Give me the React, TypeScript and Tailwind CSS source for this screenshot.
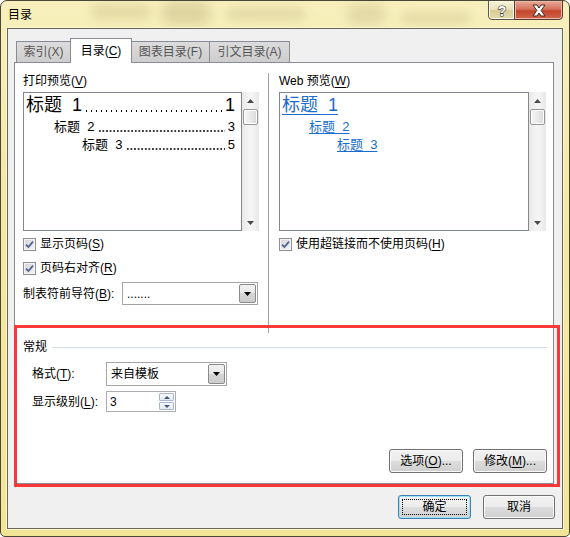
import React from "react";

const FONT = "font-['Liberation_Sans','Noto_Sans_CJK_SC',sans-serif]";

function Tri({ up = false, color = "#3c3c3c", w = 7, h = 4 }: { up?: boolean; color?: string; w?: number; h?: number }) {
  return (
    <svg width={w} height={h} viewBox={`0 0 ${w} ${h}`} className="block">
      {up ? (
        <polygon points={`0,${h} ${w},${h} ${w / 2},0`} fill={color} />
      ) : (
        <polygon points={`0,0 ${w},0 ${w / 2},${h}`} fill={color} />
      )}
    </svg>
  );
}

function VScroll() {
  return (
    <div className="flex h-full w-[17px] flex-col items-center bg-[linear-gradient(90deg,#e8e8e8,#f4f4f4_40%,#f4f4f4_60%,#e8e8e8)]">
      <div className="flex h-[17px] w-full items-center justify-center">
        <Tri up color="#4a4a4a" />
      </div>
      <div className="h-[16px] w-[15px] rounded-[2px] border border-[#969696] bg-[linear-gradient(90deg,#f6f6f6,#e9e9e9_50%,#d8d8d8)] shadow-[inset_0_0_0_1px_#ffffff]" />
      <div className="flex-1" />
      <div className="flex h-[17px] w-full items-center justify-center">
        <Tri color="#4a4a4a" />
      </div>
    </div>
  );
}

function Check() {
  return (
    <div className="flex h-[13px] w-[13px] shrink-0 items-center justify-center border border-[#8e8f8f] bg-[linear-gradient(135deg,#d4d4d4,#f4f4f4)] shadow-[inset_0_0_0_1px_#f4f4f4]">
      <svg width="9" height="9" viewBox="0 0 9 9" className="block">
        <path d="M1 4.6 L3.4 7 L8 1.6" stroke="#4a6190" strokeWidth="1.7" fill="none" />
      </svg>
    </div>
  );
}

function DropArrow() {
  return (
    <div className="flex h-full w-[17px] shrink-0 items-center justify-center rounded-[2px] border border-[#8a8a8a] bg-[linear-gradient(#f3f3f3,#e6e6e6_50%,#d6d6d6_50%,#cbcbcb)]">
      <Tri color="#000000" />
    </div>
  );
}

function Btn({ children, w, isDefault = false }: { children: React.ReactNode; w: string; isDefault?: boolean }) {
  return (
    <div
      className={
        isDefault
          ? `relative flex h-[24px] ${w} items-center justify-center rounded-[3px] border border-[#3c7fb1] bg-[linear-gradient(#f4f4f4,#ececec_50%,#dfdfdf_50%,#d2d2d2)] shadow-[inset_0_0_0_1px_#9fe2fb]`
          : `flex h-[24px] ${w} items-center justify-center rounded-[3px] border border-[#707070] bg-[linear-gradient(#f2f2f2,#ebebeb_50%,#dddddd_50%,#cfcfcf)] shadow-[inset_0_0_0_1px_#fbfbfb]`
      }
    >
      {isDefault && <div className="pointer-events-none absolute inset-[3px] border border-dotted border-[#000000]" />}
      <span className="leading-[16px]">{children}</span>
    </div>
  );
}

const U = ({ c }: { c: string }) => <span className="underline decoration-1 underline-offset-[2px]">{c}</span>;

export default function App() {
  return (
    <div
      className={`relative h-[537px] w-[570px] overflow-hidden rounded-t-[7px] rounded-b-[5px] border border-[#4b4636] bg-[linear-gradient(180deg,#f7f0bd_0%,#f4e9a6_35%,#f2e595_100%)] ${FONT} text-[12px] text-black`}
    >
      {/* blurred aero background */}
      <div className="pointer-events-none absolute left-[90px] top-[3px] h-[16px] w-[60px] rounded-full bg-[#d8cd97] opacity-60 blur-[5px]" />
      <div className="pointer-events-none absolute left-[160px] top-[0px] h-[24px] w-[50px] rounded-full bg-[#b9ad7a] opacity-40 blur-[6px]" />
      <div className="pointer-events-none absolute left-[225px] top-[6px] h-[14px] w-[80px] rounded-full bg-[#d9cf9c] opacity-60 blur-[5px]" />
      <div className="pointer-events-none absolute left-[345px] top-[2px] h-[22px] w-[40px] rounded-full bg-[#c4b988] opacity-40 blur-[6px]" />
      <div className="pointer-events-none absolute left-[400px] top-[10px] h-[14px] w-[70px] rounded-full bg-[#d6cb96] opacity-50 blur-[5px]" />

      {/* title bar */}
      <div className="relative flex h-[27px] items-start">
        <div className="flex h-[27px] items-center pl-[7px] leading-none">目录</div>
        <div className="flex-1" />
        <div className="mr-[6px] -mt-px flex">
          <div className="flex h-[20px] w-[27px] items-center justify-center rounded-bl-[4px] border border-[#5a5646] bg-[linear-gradient(#f7f3dc,#e9e0b6_50%,#d8cc96_50%,#e4dbaa)] shadow-[inset_0_0_0_1px_#fffbe6]">
            <svg width="12" height="15" viewBox="0 0 12 15" className="block">
              <text x="6" y="12.5" textAnchor="middle" fontSize="14" fontWeight="bold" fontFamily="Liberation Sans, sans-serif" fill="#ffffff" stroke="#3a3a3a" strokeWidth="1.2" paintOrder="stroke">?</text>
            </svg>
          </div>
          <div className="-ml-px flex h-[20px] w-[49px] items-center justify-center rounded-br-[4px] border border-[#5a3a30] bg-[linear-gradient(#e9a898,#d6725c_45%,#c4442a_55%,#d0664c)] shadow-[inset_0_0_0_1px_#efb9a9]">
            <svg width="16" height="13" viewBox="0 0 16 13" className="block">
              <path
                d="M2 1 H6 L8 4 L10 1 H14 L10.2 6.5 L14 12 H10 L8 9 L6 12 H2 L5.8 6.5 Z"
                fill="#ffffff"
                stroke="#3a2a25"
                strokeWidth="1"
                strokeLinejoin="round"
              />
            </svg>
          </div>
        </div>
      </div>

      {/* client area */}
      <div className="relative mx-[6px] flex h-[501px] flex-col border border-[#6a6650] bg-[#f0f0f0] shadow-[0_0_0_1px_#fbf6d6]">
        {/* tabs */}
        <div className="relative z-10 -mb-px ml-[6px] mt-[9px] flex h-[25px] items-end pl-[2px]">
          <div className="flex h-[22px] w-[54px] items-center justify-center border-b border-l border-t border-[#898c95] bg-[linear-gradient(#dcdcdc,#cdcdcd)] text-[#555555]">
            <span className="leading-[16px]">索引(X)</span>
          </div>
          <div className="flex h-[25px] w-[62px] items-start justify-center border-l border-r border-t border-[#898c95] bg-white pt-[4px]">
            <span className="leading-[16px]">
              目录(<U c="C" />)
            </span>
          </div>
          <div className="flex h-[22px] w-[78px] items-center justify-center border-b border-r border-t border-[#898c95] bg-[linear-gradient(#dcdcdc,#cdcdcd)] text-[#555555]">
            <span className="leading-[16px]">图表目录(F)</span>
          </div>
          <div className="flex h-[22px] w-[80px] items-center justify-center border-b border-r border-t border-[#898c95] bg-[linear-gradient(#dcdcdc,#cdcdcd)] text-[#555555]">
            <span className="leading-[16px]">引文目录(A)</span>
          </div>
        </div>

        {/* tab panel */}
        <div className="ml-[6px] flex h-[422px] w-[540px] flex-col border border-[#898c95] bg-white">
          {/* top two columns */}
          <div className="flex h-[270px]">
            {/* left column */}
            <div className="ml-[8px] flex w-[236px] flex-col">
              <div className="mt-[10px] h-[16px] leading-[16px]">
                打印预览(<U c="V" />)
              </div>
              <div className="mt-[3px] flex h-[139px]">
                <div className="flex h-full w-[219px] flex-col overflow-hidden border border-[#828790] bg-white">
                  <div className="flex h-[24px] items-center whitespace-pre pl-[2px] pr-[6px] text-[18px] leading-[24px]">
                    <span className="shrink-0">标题  1</span>
                    <span className="mb-[5px] ml-[2px] mr-[2px] h-[2px] min-w-0 flex-1 self-end bg-[radial-gradient(circle,#000000_0.8px,transparent_1.1px)] bg-[length:5px_2px] bg-left bg-repeat-x" />
                    <span className="shrink-0">1</span>
                  </div>
                  <div className="flex h-[20px] items-center whitespace-pre pl-[30px] pr-[6px] text-[13px] leading-[20px]">
                    <span className="shrink-0">标题  2</span>
                    <span className="mb-[5px] ml-[4px] mr-[3px] h-[2px] min-w-0 flex-1 self-end bg-[radial-gradient(circle,#000000_0.6px,transparent_0.9px)] bg-[length:3.6px_2px] bg-left bg-repeat-x" />
                    <span className="shrink-0">3</span>
                  </div>
                  <div className="flex h-[16px] items-center whitespace-pre pl-[58px] pr-[6px] text-[13px] leading-[16px]">
                    <span className="shrink-0">标题  3</span>
                    <span className="mb-[3px] ml-[4px] mr-[3px] h-[2px] min-w-0 flex-1 self-end bg-[radial-gradient(circle,#000000_0.6px,transparent_0.9px)] bg-[length:3.6px_2px] bg-left bg-repeat-x" />
                    <span className="shrink-0">5</span>
                  </div>
                </div>
                <VScroll />
              </div>
              <div className="mt-[5px] flex h-[16px] items-center">
                <Check />
                <span className="ml-[4px] leading-[16px]">
                  显示页码(<U c="S" />)
                </span>
              </div>
              <div className="mt-[8px] flex h-[16px] items-center">
                <Check />
                <span className="ml-[4px] leading-[16px]">
                  页码右对齐(<U c="R" />)
                </span>
              </div>
              <div className="mt-[6px] flex h-[23px] items-center">
                <span className="flex-1 leading-[16px]">
                  制表符前导符(<U c="B" />):
                </span>
                <div className="mr-[1px] flex h-[23px] w-[136px] items-stretch border border-[#a5a5a5] bg-white p-[1px]">
                  <div className="flex flex-1 items-center pl-[3px] leading-[16px]">.......</div>
                  <DropArrow />
                </div>
              </div>
            </div>

            {/* divider */}
            <div className="ml-[9px] mt-[10px] h-[260px] w-px bg-[#a0a0a0]" />

            {/* right column */}
            <div className="ml-[10px] flex w-[267px] flex-col">
              <div className="mt-[10px] h-[16px] leading-[16px]">
                Web 预览(<U c="W" />)
              </div>
              <div className="mt-[3px] flex h-[139px]">
                <div className="flex h-full w-[250px] flex-col border border-[#828790] bg-white text-[#1a6dcf]">
                  <div className="h-[24px] whitespace-pre pl-[2px] text-[18px] leading-[24px]">
                    <span className="underline decoration-1 underline-offset-[3px]">标题  1</span>
                  </div>
                  <div className="h-[20px] whitespace-pre pl-[29px] text-[13px] leading-[20px]">
                    <span className="underline decoration-1 underline-offset-[2px]">标题  2</span>
                  </div>
                  <div className="h-[16px] whitespace-pre pl-[57px] text-[13px] leading-[16px]">
                    <span className="underline decoration-1 underline-offset-[2px]">标题  3</span>
                  </div>
                </div>
                <VScroll />
              </div>
              <div className="mt-[5px] flex h-[16px] items-center">
                <Check />
                <span className="ml-[4px] leading-[16px]">
                  使用超链接而不使用页码(<U c="H" />)
                </span>
              </div>
            </div>
          </div>

          {/* general section */}
          <div className="mt-[6px] flex h-[16px] items-center pl-[8px] pr-[6px]">
            <span className="leading-[16px]">常规</span>
            <div className="ml-[5px] h-px flex-1 bg-[#d5dfe5]" />
          </div>
          <div className="mt-[7px] flex h-[24px] items-center pl-[17px]">
            <span className="w-[74px] leading-[16px]">
              格式(<U c="T" />):
            </span>
            <div className="flex h-[24px] w-[121px] items-stretch border border-[#a5a5a5] bg-white p-[1px]">
              <div className="flex flex-1 items-center pl-[3px] leading-[16px]">来自模板</div>
              <DropArrow />
            </div>
          </div>
          <div className="mt-[5px] flex h-[21px] items-center pl-[17px]">
            <span className="w-[74px] leading-[16px]">
              显示级别(<U c="L" />):
            </span>
            <div className="flex h-[21px] w-[70px] items-stretch border border-[#abadb3] bg-white">
              <div className="flex flex-1 items-center pl-[3px] leading-[16px]">3</div>
              <div className="my-px mr-px flex w-[15px] flex-col gap-px">
                <div className="flex flex-1 items-center justify-center rounded-[1px] border border-[#a9b7cc] bg-[linear-gradient(#f7f9fc,#e3e9f2)]">
                  <Tri up color="#46577a" w={6} h={3} />
                </div>
                <div className="flex flex-1 items-center justify-center rounded-[1px] border border-[#a9b7cc] bg-[linear-gradient(#f7f9fc,#e3e9f2)]">
                  <Tri color="#46577a" w={6} h={3} />
                </div>
              </div>
            </div>
          </div>
          <div className="mt-[37px] flex h-[24px] justify-end gap-[10px] pr-[6px]">
            <Btn w="w-[74px]">
              选项(<U c="O" />)...
            </Btn>
            <Btn w="w-[74px]">
              修改(<U c="M" />)...
            </Btn>
          </div>
        </div>

        {/* dialog buttons */}
        <div className="mt-[11px] flex justify-end gap-[12px] pr-[7px]">
          <Btn w="w-[73px]" isDefault>
            确定
          </Btn>
          <Btn w="w-[72px]">取消</Btn>
        </div>
      </div>

      {/* red annotation */}
      <div className="pointer-events-none absolute left-[13px] top-[324px] h-[162px] w-[546px] border-[3px] border-[#fb3838]" />
    </div>
  );
}
